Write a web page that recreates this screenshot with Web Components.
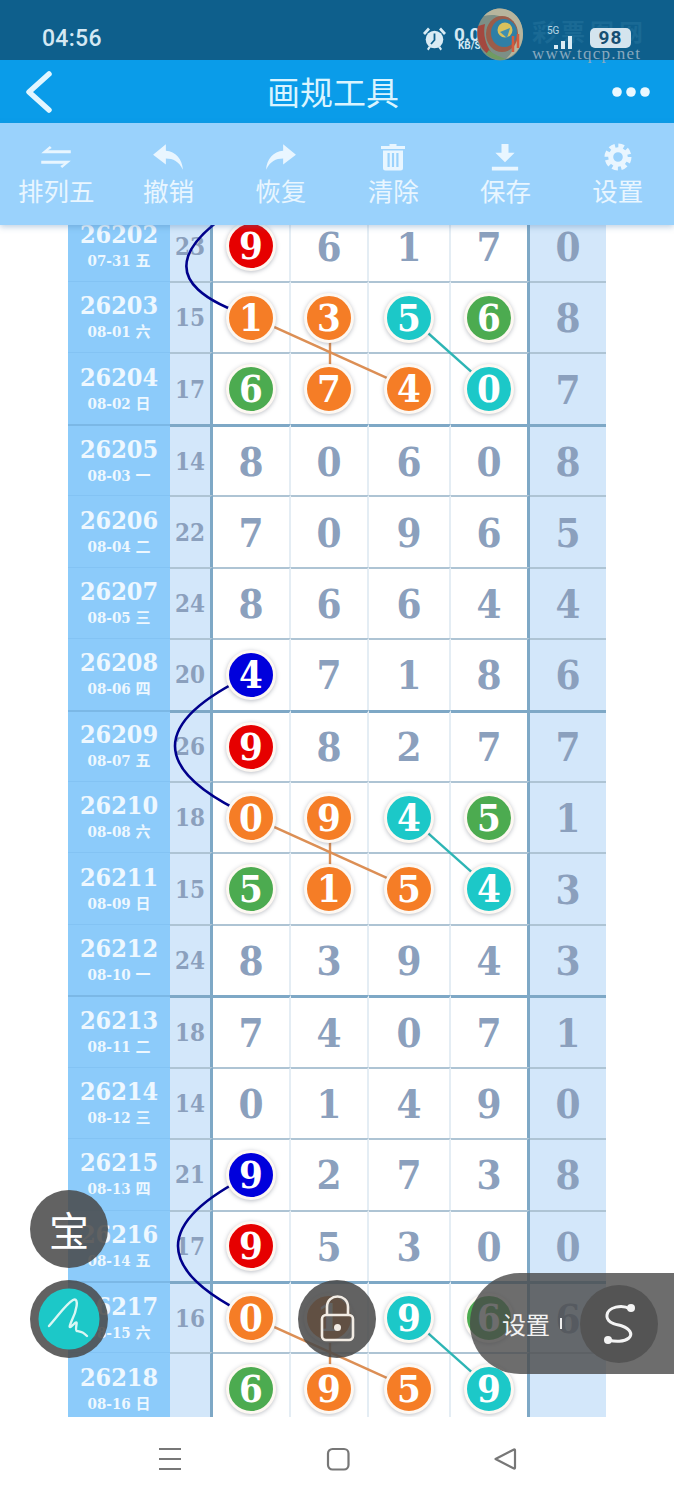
<!DOCTYPE html>
<html lang="zh">
<head>
<meta charset="utf-8">
<title>画规工具</title>
<style>
    html, body { margin: 0; padding: 0; background: #fff; }
    body { font-family: "Noto Sans CJK SC", "Liberation Sans", sans-serif; }
</style>
</head>
<body>
<app-shell>
    <status-bar time="04:56"></status-bar>
    <title-bar>画规工具</title-bar>
    <tool-bar>
        <tool-btn label="排列五"><svg viewBox="0 0 26 20"><path d="M8 1 L1 7 H25 V4.6 H6.5 L9.5 2.6 Z M18 19 L25 13 H1 V15.4 H19.5 L16.5 17.4 Z"/></svg></tool-btn>
        <tool-btn label="撤销"><svg viewBox="0 0 30 26"><path d="M13 1 L1 11 L13 20 V14.5 C20 14.5 25 17 29 25 C28.5 15 22 8 13 7.2 Z"/></svg></tool-btn>
        <tool-btn label="恢复"><svg viewBox="0 0 30 26"><path d="M17 1 L29 11 L17 20 V14.5 C10 14.5 5 17 1 25 C1.5 15 8 8 17 7.2 Z"/></svg></tool-btn>
        <tool-btn label="清除"><svg viewBox="0 0 26 28"><path d="M9.5 1 H16.5 V3 H25 V6 H1 V3 H9.5 Z M3 7.5 H23 V25 Q23 27.5 20.5 27.5 H5.5 Q3 27.5 3 25 Z" /><path fill="#9ad2fc" d="M7.5 10 H9.7 V24 H7.5 Z M11.9 10 H14.1 V24 H11.9 Z M16.3 10 H18.5 V24 H16.3 Z"/></svg></tool-btn>
        <tool-btn label="保存"><svg viewBox="0 0 32 32"><path d="M12 1 H20 V11 H27 L16 22 L5 11 H12 Z M1 27 H31 V31.5 H1 Z"/></svg></tool-btn>
        <tool-btn label="设置"><svg viewBox="0 0 28 28"><circle cx="14" cy="14" r="11" fill="none" stroke="currentColor" stroke-width="5" stroke-dasharray="5.4 3.24"/><circle cx="14" cy="14" r="7.3" fill="none" stroke="currentColor" stroke-width="5"/></svg></tool-btn>
    </tool-bar>
    <lotto-chart></lotto-chart>
    <nav-bar></nav-bar>

    <float-btn slot="float" style="left:30px;top:1190px"><span class="bao">宝</span></float-btn>
    <float-btn slot="float" style="left:30px;top:1280px"><svg width="78" height="78" viewBox="0 0 78 78"><circle cx="39" cy="39" r="30.5" fill="#1cc8c8"/><path d="M19 46 C28 36 36 24 43 20 C50 17 46 32 42 40 C39 47 38 50 45 43 C49 40 44 50 47 51 C52 52 53 52 57 56" fill="none" stroke="#d9f7f4" stroke-width="2.4" stroke-linecap="round"/></svg></float-btn>
    <float-btn slot="float" style="left:298px;top:1280px"><svg width="78" height="78" viewBox="0 0 78 78"><rect x="24" y="35" width="31" height="25" rx="4" fill="none" stroke="#f2ece4" stroke-width="2.6"/><path d="M29 35 V27 C29 13 50 13 50 27 V35" fill="none" stroke="#f2ece4" stroke-width="2.6"/><circle cx="39.500" cy="47.500" r="3.500" fill="#f2ece4"/></svg></float-btn>
    <set-pill slot="float">设置</set-pill>
</app-shell>

<script>
const COLORS = { r: '#e60000', b: '#0000dc', o: '#f57d26', g: '#4cab50', t: '#1cc8c8' };
const DIGIT_FONT = '"DejaVu Serif Condensed", "DejaVu Serif", "Liberation Serif", serif';

// id, date, sum, four numbers (letter = ball colour), last column
const ROWS = [
    ['26202', '07-31 五', '23', ['9r', '6', '1', '7'], '0'],
    ['26203', '08-01 六', '15', ['1o', '3o', '5t', '6g'], '8'],
    ['26204', '08-02 日', '17', ['6g', '7o', '4o', '0t'], '7'],
    ['26205', '08-03 一', '14', ['8', '0', '6', '0'], '8'],
    ['26206', '08-04 二', '22', ['7', '0', '9', '6'], '5'],
    ['26207', '08-05 三', '24', ['8', '6', '6', '4'], '4'],
    ['26208', '08-06 四', '20', ['4b', '7', '1', '8'], '6'],
    ['26209', '08-07 五', '26', ['9r', '8', '2', '7'], '7'],
    ['26210', '08-08 六', '18', ['0o', '9o', '4t', '5g'], '1'],
    ['26211', '08-09 日', '15', ['5g', '1o', '5o', '4t'], '3'],
    ['26212', '08-10 一', '24', ['8', '3', '9', '4'], '3'],
    ['26213', '08-11 二', '18', ['7', '4', '0', '7'], '1'],
    ['26214', '08-12 三', '14', ['0', '1', '4', '9'], '0'],
    ['26215', '08-13 四', '21', ['9b', '2', '7', '3'], '8'],
    ['26216', '08-14 五', '17', ['9r', '5', '3', '0'], '0'],
    ['26217', '08-15 六', '16', ['0o', '1o', '9t', '6g'], '6'],
    ['26218', '08-16 日', '', ['6g', '9o', '5o', '9t'], ''],
];
const THICK = new Set(['26205', '26209', '26213', '26217']);

class AppShell extends HTMLElement {
    connectedCallback() {
        this.attachShadow({ mode: 'open' });
        this.shadowRoot.innerHTML = `
            <style>
                :host { display: flex; flex-direction: column; position: relative; height: 1500px; width: 674px; overflow: hidden; }
                .floats { position: absolute; inset: 0; pointer-events: none; z-index: 20; }
            </style>
            <slot></slot>
            <div class="floats"><slot name="float"></slot></div>
        `;
    }
}

class StatusBar extends HTMLElement {
    connectedCallback() {
        this.attachShadow({ mode: 'open' });
        this.shadowRoot.innerHTML = `
            <style>
                :host { display: flex; align-items: center; position: relative; height: 60px; flex: none; padding: 16px 0 0 42px; box-sizing: border-box; background: #0e5f8c; color: #d4e8f3; }
                .time { font: 500 23px Roboto, sans-serif; letter-spacing: .3px; }
                .over { position: absolute; }
                .speed { left: 454px; top: 25px; font: 700 19px/19px Roboto, sans-serif; letter-spacing: -.5px; }
                .unit { left: 458px; top: 41px; font: 700 10px/10px Roboto, sans-serif; }
                .five { left: 547px; top: 26px; font: 400 10px/10px Roboto, sans-serif; opacity: .85; }
                .batt { left: 590px; top: 28px; width: 41px; height: 20px; box-sizing: border-box; border-radius: 5px; background: #d4e4ee; color: #174f73; font: 700 19px/20px Roboto, sans-serif; text-align: center; letter-spacing: 1px; }
                .mark { left: 532px; top: 18px; font: 700 24px/26px "Noto Sans CJK SC", sans-serif; color: #1a6a95; letter-spacing: 5px; }
                .url { left: 532px; top: 45px; font: 17px/18px "Liberation Serif", serif; color: #88a9bf; letter-spacing: 1.25px; }
            </style>
            <span class="time">${this.getAttribute('time')}</span>
            <svg class="over" style="left:421px;top:25px" width="27" height="27" viewBox="0 0 27 27">
                <circle cx="13.500" cy="14.500" r="8.800" fill="#d9ebf4"/>
                <path d="M13.500 8.500 V15 L10 19" fill="none" stroke="#0e5f8c" stroke-width="1.800"/>
                <path d="M2 8 L7 2.500 L9 4.500 L4 10 Z M25 8 L20 2.500 L18 4.500 L23 10 Z M6 24 L8 21 L10 22 L7.500 25.500 Z M21 24 L19 21 L17 22 L19.500 25.500 Z" fill="#d9ebf4"/>
            </svg>
            <span class="over speed">0.00</span>
            <span class="over unit">KB/S</span>
            <span class="over mark">彩票图网</span>
            <svg class="over" style="left:476px;top:8px" width="48" height="53" viewBox="0 0 48 53">
                <ellipse cx="24" cy="26.500" rx="23" ry="26" fill="#7c8f86"/>
                <path d="M24 .500 C38 1 47 12 47 26 C47 38 40 47 30 51 C40 42 42 28 36 17 C30 8 18 5 8 8 C12 3 18 .500 24 .500 Z" fill="#b7b59d"/>
                <path d="M2 18 C-1 32 6 46 20 50 C12 42 6 30 9 16 Z" fill="#a3483f"/>
                <path d="M10 46 C16 51 24 53 30 51 C25 49 18 47 13 42 Z" fill="#6f9b62"/>
                <ellipse cx="26" cy="26" rx="16" ry="18" fill="#9a5d4a"/>
                <ellipse cx="28" cy="25" rx="13" ry="14" fill="#2f7fa6"/>
                <circle cx="29" cy="22" r="7.500" fill="#d9c15c"/>
                <path d="M24 24 L34 20 L31 30 Z" fill="#3f8fb0"/>
                <path d="M37 28 V44 M42 26 V40" stroke="#d65b3d" stroke-width="2.500" fill="none"/>
            </svg>
            <span class="over five">5G</span>
            <svg class="over" style="left:553px;top:33px" width="24" height="16" viewBox="0 0 24 16"><path d="M1 12 H5 V16 H1 Z M8 8 H12 V16 H8 Z M15 3 H19 V16 H15 Z" fill="#d9ebf4"/></svg>
            <span class="over batt">98</span>
            <span class="over url">www.tqcp.net</span>
        `;
    }
}

class TitleBar extends HTMLElement {
    connectedCallback() {
        this.attachShadow({ mode: 'open' });
        this.shadowRoot.innerHTML = `
            <style>
                :host { display: flex; align-items: center; justify-content: space-between; height: 63px; flex: none; padding: 0 24px; box-sizing: border-box; background: #0a9ce9; color: #d9f4ff; }
                .title { font-size: 33px; line-height: 63px; }
                svg { display: block; }
            </style>
            <svg width="30" height="44" viewBox="0 0 30 44"><path d="M25 4 L5 22 L25 40" fill="none" stroke="#e1f6ff" stroke-width="5.500" stroke-linecap="round" stroke-linejoin="round"/></svg>
            <span class="title"><slot></slot></span>
            <svg width="38" height="12" viewBox="0 0 38 12"><circle cx="5" cy="6" r="4.800" fill="#eaf8ff"/><circle cx="19" cy="6" r="4.800" fill="#eaf8ff"/><circle cx="33" cy="6" r="4.800" fill="#eaf8ff"/></svg>
        `;
    }
}

class ToolBar extends HTMLElement {
    connectedCallback() {
        this.attachShadow({ mode: 'open' });
        this.shadowRoot.innerHTML = `
            <style>
                :host { display: grid; grid-template-columns: repeat(6, 1fr); height: 102px; flex: none; position: relative; z-index: 10; background: #9ad2fc; box-shadow: 0 2px 6px rgba(70, 120, 170, .35); }
            </style>
            <slot></slot>
        `;
    }
}

class ToolBtn extends HTMLElement {
    connectedCallback() {
        this.attachShadow({ mode: 'open' });
        this.shadowRoot.innerHTML = `
            <style>
                :host { display: flex; flex-direction: column; align-items: center; color: #e9f6ff; }
                .icon { height: 34px; margin-top: 17px; display: flex; align-items: center; justify-content: center; }
                ::slotted(svg) { height: 28px; width: 32px; fill: currentColor; }
                .label { font-size: 25.500px; line-height: 32px; margin-top: 0; white-space: nowrap; }
            </style>
            <div class="icon"><slot></slot></div>
            <div class="label">${this.getAttribute('label')}</div>
        `;
    }
}

class NumBall extends HTMLElement {
    static get observedAttributes() {
        return ['color'];
    }

    connectedCallback() {
        this.attachShadow({ mode: 'open' });
        const color = COLORS[this.getAttribute('color')];
        this.shadowRoot.innerHTML = `
            <style>
                :host { display: flex; align-items: center; justify-content: center; position: relative; z-index: 3; width: 44px; height: 44px; border-radius: 50%; background: ${color}; color: #fff; border: 3px solid #fdf8f2; box-shadow: 0 1px 4px rgba(60, 70, 90, .35); font: bold 38px/44px ${DIGIT_FONT}; }
            </style>
            <slot></slot>
        `;
    }
}

class ChartRow extends HTMLElement {
    set data(row) {
        this._row = row;
    }

    connectedCallback() {
        this.attachShadow({ mode: 'open' });
        const [id, date, sum, nums, last] = this._row;
        const thick = THICK.has(id);
        const cells = nums.map((n) => {
            const inner = n.length > 1 ? `<num-ball color="${n[1]}">${n[0]}</num-ball>` : n;
            return `<div class="cell num">${inner}</div>`;
        }).join('');
        this.shadowRoot.innerHTML = `
            <style>
                :host { display: grid; grid-template-columns: 102px 43px 78px 78px 82px 79px 76px; height: 71.430px; font: bold 40px ${DIGIT_FONT}; }
                .cell { display: flex; align-items: center; justify-content: center; box-sizing: border-box; border-top: ${thick ? '3px solid #7ea8c6' : '2px solid #aec4d4'}; color: #8ba0bd; min-width: 0; }
                .id { flex-direction: column; background: #8ccbfa; color: #eef8ff; border-top: ${thick ? '2px solid #7bb8e6' : '1px solid #83c3f4'}; }
                .id b { font-size: 25px; line-height: 30px; }
                .id small { font-size: 15px; line-height: 22px; font-family: "DejaVu Serif Condensed", "DejaVu Serif", "Noto Sans CJK SC", serif; }
                .sum { background: #d3e7fa; font-size: 24px; border-right: 3px solid #7ea8c6; }
                .num { border-right: 2px solid #e4edf4; }
                .num.end { border-right: 3px solid #7ea8c6; }
                .last { background: #d3e7fa; }
            </style>
            <div class="cell id"><b>${id}</b><small>${date}</small></div>
            <div class="cell sum">${sum}</div>
            ${cells}
            <div class="cell last">${last}</div>
        `;
        this.shadowRoot.querySelectorAll('.num')[3].classList.add('end');
    }
}

class LottoChart extends HTMLElement {
    connectedCallback() {
        this.attachShadow({ mode: 'open' });
        this.shadowRoot.innerHTML = `
            <style>
                :host { display: block; flex: 1; min-height: 0; overflow: hidden; }
                .inner { position: relative; width: 538px; margin: -15.400px auto 0; }
                svg { position: absolute; left: 0; top: 0; width: 100%; height: 100%; z-index: 2; pointer-events: none; }
            </style>
            <div class="inner"><div class="rows"></div>${this.lines()}</div>
        `;
        const rows = this.shadowRoot.querySelector('.rows');
        ROWS.forEach((row) => {
            const el = document.createElement('chart-row');
            el.data = row;
            rows.appendChild(el);
        });
    }

    // the drawn links: x/y here are relative to the chart's top left corner
    lines() {
        const rowY = (i) => 35.500 + i * 71.430;
        const col = [184, 262, 342, 422];
        const link = (c1, r1, c2, r2, color) =>
            `<line x1="${col[c1]}" y1="${rowY(r1)}" x2="${col[c2]}" y2="${rowY(r2)}" stroke="${color}" stroke-width="2.400"/>`;
        const pairs = [1, 8, 15].map((r) =>
            link(0, r, 2, r + 1, '#dc8f55') + link(1, r, 1, r + 1, '#dc8f55') + link(2, r, 3, r + 1, '#2db5b5')
        ).join('');
        const curve = (x0, y0, cx, cy, y1) =>
            `<path d="M${x0} ${y0} Q${cx} ${cy} 184 ${y1}" fill="none" stroke="#00008c" stroke-width="2.600"/>`;
        return `<svg viewBox="0 0 538 1214">
            ${curve(232, rowY(-1), 32, rowY(0) + 22, rowY(1))}
            ${curve(184, rowY(6), 30, rowY(7) + 1, rowY(8))}
            ${curve(184, rowY(13), 36, rowY(14) + 1, rowY(15))}
            ${pairs}
        </svg>`;
    }
}

class FloatBtn extends HTMLElement {
    connectedCallback() {
        this.attachShadow({ mode: 'open' });
        this.shadowRoot.innerHTML = `
            <style>
                :host { display: flex; align-items: center; justify-content: center; position: absolute; width: 78px; height: 78px; border-radius: 50%; background: rgba(72, 72, 72, .86); color: #fff; font-size: 40px; line-height: 78px; }
                ::slotted(svg) { display: block; }
            </style>
            <slot></slot>
        `;
    }
}

class SetPill extends HTMLElement {
    connectedCallback() {
        this.attachShadow({ mode: 'open' });
        this.shadowRoot.innerHTML = `
            <style>
                :host { display: flex; align-items: center; position: absolute; left: 470px; top: 1273px; width: 204px; height: 101px; box-sizing: border-box; padding-left: 32px; border-radius: 50px 0 0 50px; background: rgba(72, 72, 72, .8); color: #f2f2f2; font-size: 24px; }
                .bar { width: 2px; height: 11px; margin-left: 10px; background: #eee; }
                .s { width: 78px; height: 78px; margin-left: 18px; border-radius: 50%; background: #545454; display: flex; align-items: center; justify-content: center; }
            </style>
            <span><slot></slot></span>
            <span class="bar"></span>
            <span class="s">
                <svg width="78" height="78" viewBox="0 0 78 78"><path d="M50 24 C42 19 28 22 27 30 C26 38 36 39 42 41 C50 44 53 49 49 53 C44 57 35 57 29 55" fill="none" stroke="#f4f4f4" stroke-width="3"/><circle cx="51" cy="23" r="4" fill="#f4f4f4"/><circle cx="28" cy="55" r="4" fill="#f4f4f4"/></svg>
            </span>
        `;
    }
}

class NavBar extends HTMLElement {
    connectedCallback() {
        this.attachShadow({ mode: 'open' });
        this.shadowRoot.innerHTML = `
            <style>
                :host { display: flex; height: 83px; flex: none; background: #fff; position: relative; z-index: 5; }
                .slot-a, .slot-b, .slot-c { flex: 1; display: flex; align-items: center; justify-content: center; padding-bottom: 1px; box-sizing: border-box; }
                .slot-a { flex: 0 0 340px; padding-right: 0; }
                .slot-b { flex: 0 0 0; }
                .wrap { display: grid; grid-template-columns: 168px 168px 166px; width: 502px; margin-left: 86px; }
                .wrap div { display: flex; justify-content: center; align-items: center; height: 83px; padding-bottom: 0; }
                svg { display: block; }
            </style>
            <div class="wrap">
                <div><svg width="26" height="24" viewBox="0 0 26 24"><path d="M2 2 H24 M2 12 H24 M2 22 H24" stroke="#777" stroke-width="2.200" fill="none"/></svg></div>
                <div><svg width="24" height="24" viewBox="0 0 24 24"><rect x="2" y="2" width="20.500" height="20.500" rx="4.500" fill="none" stroke="#777" stroke-width="2.200"/></svg></div>
                <div><svg width="24" height="24" viewBox="0 0 24 24"><path d="M2.500 12 L21 2.500 Q22 2.200 22 3.500 V20.500 Q22 21.800 21 21.500 Z" fill="none" stroke="#777" stroke-width="2.200" stroke-linejoin="round"/></svg></div>
            </div>
        `;
    }
}

customElements.define('app-shell', AppShell);
customElements.define('status-bar', StatusBar);
customElements.define('title-bar', TitleBar);
customElements.define('tool-bar', ToolBar);
customElements.define('tool-btn', ToolBtn);
customElements.define('num-ball', NumBall);
customElements.define('chart-row', ChartRow);
customElements.define('lotto-chart', LottoChart);
customElements.define('float-btn', FloatBtn);
customElements.define('set-pill', SetPill);
customElements.define('nav-bar', NavBar);
</script>
</body>
</html>
